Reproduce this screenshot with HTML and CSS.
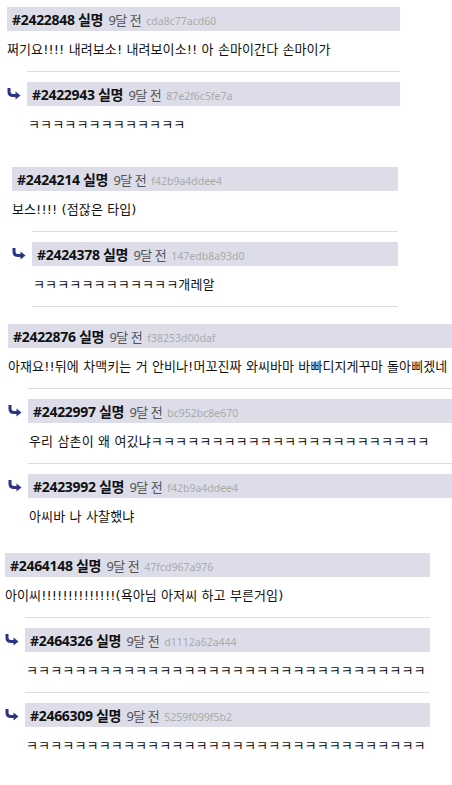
FILE: index.html
```html
<!DOCTYPE html>
<html>
<head>
    <meta charset="utf-8">
    <title>댓글</title>
    <link rel="stylesheet" href="styles.css">
</head>
<body>

<div class="cmt c1">
	<div class="head"><b>#2422848 실명</b> <span class="ago">9달 전</span> <span class="hash">cda8c77acd60</span></div>
	<p class="text">쩌기요!!!! 내려보소! 내려보이소!! 아 손마이간다 손마이가</p>
	<div class="reply">
		<svg class="arrow" width="14" height="12" viewBox="0 0 14 12"><path d="M2 0 V4 Q2 7.5 6 7.5 H9" fill="none" stroke="#2c3584" stroke-width="3"/><path d="M8.5 3.5 L13.5 7.5 L8.5 11.5 Z" fill="#2c3584"/></svg>
		<div class="rbox">
			<div class="head"><b>#2422943 실명</b> <span class="ago">9달 전</span> <span class="hash">87e2f6c5fe7a</span></div>
			<p class="text">ㅋㅋㅋㅋㅋㅋㅋㅋㅋㅋㅋㅋㅋ</p>
		</div>
	</div>
</div>

<div class="cmt c2">
	<div class="head"><b>#2424214 실명</b> <span class="ago">9달 전</span> <span class="hash">f42b9a4ddee4</span></div>
	<p class="text">보스!!!! (점잖은 타입)</p>
	<div class="reply last">
		<svg class="arrow" width="14" height="12" viewBox="0 0 14 12"><path d="M2 0 V4 Q2 7.5 6 7.5 H9" fill="none" stroke="#2c3584" stroke-width="3"/><path d="M8.5 3.5 L13.5 7.5 L8.5 11.5 Z" fill="#2c3584"/></svg>
		<div class="rbox">
			<div class="head"><b>#2424378 실명</b> <span class="ago">9달 전</span> <span class="hash">147edb8a93d0</span></div>
			<p class="text">ㅋㅋㅋㅋㅋㅋㅋㅋㅋㅋㅋㅋ개레알</p>
		</div>
	</div>
</div>

<div class="cmt c3">
	<div class="head"><b>#2422876 실명</b> <span class="ago">9달 전</span> <span class="hash">f38253d00daf</span></div>
	<p class="text">아재요!!뒤에 차맥키는 거 안비나!머꼬진짜 와씨바마 바빠디지게꾸마 돌아삐겠네</p>
	<div class="reply">
		<svg class="arrow" width="14" height="12" viewBox="0 0 14 12"><path d="M2 0 V4 Q2 7.5 6 7.5 H9" fill="none" stroke="#2c3584" stroke-width="3"/><path d="M8.5 3.5 L13.5 7.5 L8.5 11.5 Z" fill="#2c3584"/></svg>
		<div class="rbox">
			<div class="head"><b>#2422997 실명</b> <span class="ago">9달 전</span> <span class="hash">bc952bc8e670</span></div>
			<p class="text">우리 삼촌이 왜 여깄냐ㅋㅋㅋㅋㅋㅋㅋㅋㅋㅋㅋㅋㅋㅋㅋㅋㅋㅋㅋㅋㅋㅋㅋ</p>
		</div>
	</div>
	<div class="reply">
		<svg class="arrow" width="14" height="12" viewBox="0 0 14 12"><path d="M2 0 V4 Q2 7.5 6 7.5 H9" fill="none" stroke="#2c3584" stroke-width="3"/><path d="M8.5 3.5 L13.5 7.5 L8.5 11.5 Z" fill="#2c3584"/></svg>
		<div class="rbox">
			<div class="head"><b>#2423992 실명</b> <span class="ago">9달 전</span> <span class="hash">f42b9a4ddee4</span></div>
			<p class="text">아씨바 나 사찰했냐</p>
		</div>
	</div>
</div>

<div class="cmt c4">
	<div class="head"><b>#2464148 실명</b> <span class="ago">9달 전</span> <span class="hash">47fcd967a976</span></div>
	<p class="text">아이씨!!!!!!!!!!!!!!(욕아님 아저씨 하고 부른거임)</p>
	<div class="reply">
		<svg class="arrow" width="14" height="12" viewBox="0 0 14 12"><path d="M2 0 V4 Q2 7.5 6 7.5 H9" fill="none" stroke="#2c3584" stroke-width="3"/><path d="M8.5 3.5 L13.5 7.5 L8.5 11.5 Z" fill="#2c3584"/></svg>
		<div class="rbox">
			<div class="head"><b>#2464326 실명</b> <span class="ago">9달 전</span> <span class="hash">d1112a62a444</span></div>
			<p class="text">ㅋㅋㅋㅋㅋㅋㅋㅋㅋㅋㅋㅋㅋㅋㅋㅋㅋㅋㅋㅋㅋㅋㅋㅋㅋㅋㅋㅋㅋㅋㅋㅋㅋ</p>
		</div>
	</div>
	<div class="reply">
		<svg class="arrow" width="14" height="12" viewBox="0 0 14 12"><path d="M2 0 V4 Q2 7.5 6 7.5 H9" fill="none" stroke="#2c3584" stroke-width="3"/><path d="M8.5 3.5 L13.5 7.5 L8.5 11.5 Z" fill="#2c3584"/></svg>
		<div class="rbox">
			<div class="head"><b>#2466309 실명</b> <span class="ago">9달 전</span> <span class="hash">5259f099f5b2</span></div>
			<p class="text">ㅋㅋㅋㅋㅋㅋㅋㅋㅋㅋㅋㅋㅋㅋㅋㅋㅋㅋㅋㅋㅋㅋㅋㅋㅋㅋㅋㅋㅋㅋㅋㅋㅋ</p>
		</div>
	</div>
</div>

</body>
</html>
```

FILE: styles.css
```css
*{ margin:0; padding:0;}
body{ background:#fff; color:#111; font-family: "Noto Sans", "Noto Sans CJK KR", sans-serif;}

/* comment block */
.cmt{ box-sizing: border-box;}
.c1{ width:393px; margin:7px 0 0 7px;}
.c2{ width:386px; margin:21px 0 0 12px;}
.c3{ width:444px; margin:17px 0 0 8px;}
.c4{ width:425px; margin:15px 0 0 5px;}

.head{ height:24px; padding-left:5px; background:#dcdde9; line-height:24px; white-space: nowrap; overflow: hidden;}
.head b{ font-size:14px; font-weight: bold; color:#111; letter-spacing:-0.3px;}
.head .ago{ margin-left:1px; font-size:13px; color:#555; letter-spacing:-0.5px;}
.head .hash{ margin-left:1px; font-size:10.5px; color:#aaa;}

.text{ padding:9px 0 11px; font-family: "DejaVu Sans", "Noto Sans CJK KR", sans-serif; font-size:13px; line-height:20px; color:#111; letter-spacing:0.1px; white-space: nowrap;}

/* reply */
.reply{ display: flex;}
.reply .arrow{ flex: none; margin:17px 6px 0 0;}
.reply .rbox{ flex:1; padding-top:10px; border-top:1px solid #ddd;}
.reply .rbox .text{ padding-left:1px; letter-spacing:0.15px;}
.reply.last .rbox{ border-bottom:1px solid #ddd;}
```
